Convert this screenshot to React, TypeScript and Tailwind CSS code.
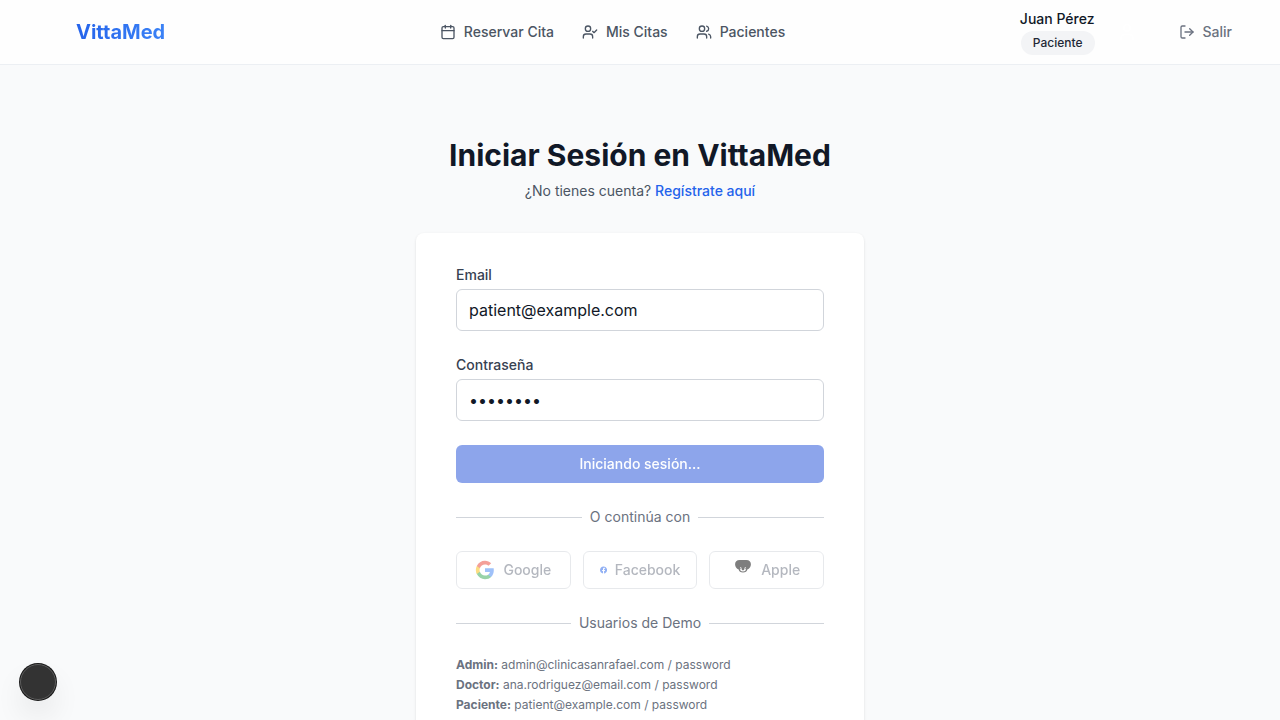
import { useState } from "react";
import type { ReactNode } from "react";
import { Calendar, LogOut, User, UserCheck, Users } from "lucide-react";

const navItems = [
  { label: "Reservar Cita", icon: Calendar },
  { label: "Mis Citas", icon: UserCheck },
  { label: "Pacientes", icon: Users },
];

const demoUsers = [
  { role: "Admin:", email: "admin@clinicasanrafael.com" },
  { role: "Doctor:", email: "ana.rodriguez@email.com" },
  { role: "Paciente:", email: "patient@example.com" },
];

function Header() {
  return (
    <header className="border-b border-[#eceff3] bg-[#fefefe]">
      <div className="mx-auto flex h-16 max-w-7xl items-center justify-between px-8">
        <a href="#inicio" className="mr-10 pl-11 text-xl font-bold">
          <span className="bg-gradient-to-r from-[#2563eb] to-[#3b82f6] bg-clip-text text-transparent">VittaMed</span>
        </a>
        <nav className="flex items-center gap-1">
          {navItems.map(({ label, icon: Icon }) => (
            <a key={label} href="#citas" className="flex items-center gap-2 px-3 py-2 text-sm font-medium text-[#4b5563]">
              <Icon className="size-4" />
              {label}
            </a>
          ))}
        </nav>
        <div className="flex items-center gap-4">
          <div className="flex items-center gap-3">
            <div className="flex flex-col items-end gap-0.5">
              <p className="text-sm font-medium text-[#111827]">Juan Pérez</p>
              <span className="rounded-full bg-[#f3f4f6] px-3 py-1 text-xs font-medium text-[#1f2937]">Paciente</span>
            </div>
            <div className="flex size-10 items-center justify-center rounded-full text-white">
              <User className="size-5" />
            </div>
          </div>
          <button type="button" className="flex items-center gap-2 px-4 py-2 text-sm font-medium text-[#6b7280]">
            <LogOut className="size-4" />
            Salir
          </button>
        </div>
      </div>
    </header>
  );
}

function Divider({ children }: { children: ReactNode }) {
  return (
    <div className="mt-6 flex items-center gap-2 text-sm text-[#6b7280]">
      <span className="h-px flex-1 bg-[#d1d5db]" />
      {children}
      <span className="h-px flex-1 bg-[#d1d5db]" />
    </div>
  );
}

function GoogleIcon() {
  return (
    <svg className="h-5 w-5" viewBox="0 0 24 24" aria-hidden="true">
      <path fill="#4285F4" d="M22.56 12.25c0-.78-.07-1.53-.2-2.25H12v4.26h5.92c-.26 1.37-1.04 2.53-2.21 3.31v2.77h3.57c2.08-1.92 3.28-4.74 3.28-8.09z" />
      <path fill="#34A853" d="M12 23c2.97 0 5.46-.98 7.28-2.66l-3.57-2.77c-.98.66-2.23 1.06-3.71 1.06-2.86 0-5.29-1.93-6.16-4.53H2.18v2.84C3.99 20.53 7.7 23 12 23z" />
      <path fill="#FBBC05" d="M5.84 14.09c-.22-.66-.35-1.36-.35-2.09s.13-1.43.35-2.09V7.07H2.18C1.43 8.55 1 10.22 1 12s.43 3.45 1.18 4.93l2.85-2.22.81-.62z" />
      <path fill="#EA4335" d="M12 5.38c1.62 0 3.06.56 4.21 1.64l3.15-3.15C17.45 2.09 14.97 1 12 1 7.7 1 3.99 3.47 2.18 7.07l3.66 2.84c.87-2.6 3.3-4.53 6.16-4.53z" />
    </svg>
  );
}

function FacebookIcon() {
  return (
    <svg className="h-5 w-5 min-w-0" viewBox="0 0 24 24" fill="#2563eb" aria-hidden="true">
      <path d="M24 12.073c0-6.627-5.373-12-12-12s-12 5.373-12 12c0 5.99 4.388 10.954 10.125 11.854v-8.385H7.078v-3.47h3.047V9.43c0-3.007 1.792-4.669 4.533-4.669 1.312 0 2.686.235 2.686.235v2.953H15.83c-1.491 0-1.956.925-1.956 1.874v2.25h3.328l-.532 3.47h-2.796v8.385C19.612 23.027 24 18.062 24 12.073z" />
    </svg>
  );
}

function AppleIcon() {
  return (
    <svg className="h-5 w-5" viewBox="0 0 24 24" fill="#000000" aria-hidden="true">
      <path fillRule="evenodd" d="M8 0h8c3.600 0 5.500 2.200 5.500 5.200 0 3-1.700 5.400-4.300 6.200-.3 2.200-2.200 3.600-5.200 3.600s-4.900-1.400-5.200-3.600C4.200 10.600 2.500 8.200 2.500 5.200 2.500 2.200 4.400 0 8 0zM9.200 8.600c-.6 0-1 .5-1 1.200h1.200c0 .3.200.5.500.8-.9-.2-1.300.2-1.300.8 0 1.500 1.400 2.400 3.400 2.400s3.400-.9 3.400-2.400c0-.6-.4-1-1.300-.8.3-.3.5-.5.500-.8h1.200c0-.7-.4-1.200-1-1.200s-1 .5-1 1.200c0 1.700-.7 2.500-1.800 2.500s-1.800-.8-1.800-2.500c0-.7-.4-1.200-1-1.200z" />
    </svg>
  );
}

const providers = [
  { name: "Google", icon: GoogleIcon },
  { name: "Facebook", icon: FacebookIcon },
  { name: "Apple", icon: AppleIcon },
];

function Field({ id, label, type, initial }: { id: string; label: string; type: string; initial: string }) {
  const [value, setValue] = useState(initial);
  return (
    <div>
      <label htmlFor={id} className="block text-sm font-medium text-[#374151]">{label}</label>
      <input
        id={id}
        type={type}
        value={value}
        onChange={(event) => setValue(event.target.value)}
        className="mt-1 block w-full rounded-md border border-[#d1d5db] bg-white px-3 py-2 text-base text-[#111827]"
      />
    </div>
  );
}

export default function App() {
  return (
    <div className="min-h-screen bg-[#f9fafb] font-['Inter',sans-serif] antialiased">
      <Header />
      <main className="px-8 pt-18 pb-12">
        <h1 className="text-center text-3xl font-bold text-[#111827]">Iniciar Sesión en VittaMed</h1>
        <p className="mt-2 text-center text-sm text-[#4b5563]">
          ¿No tienes cuenta? <a href="#registro" className="font-medium text-[#2563eb]">Regístrate aquí</a>
        </p>
        <section className="mx-auto mt-8 max-w-md rounded-lg bg-white px-10 py-8 shadow-sm">
          <form className="flex flex-col gap-6">
            <Field id="email" label="Email" type="email" initial="patient@example.com" />
            <Field id="password" label="Contraseña" type="password" initial="password" />
            <button type="submit" disabled className="w-full rounded-md border border-transparent bg-[#1d4ed8] px-4 py-2 text-sm font-medium text-white opacity-50">
              Iniciando sesión...
            </button>
          </form>
          <Divider>O continúa con</Divider>
          <div className="mt-6 grid grid-cols-3 gap-3">
            {providers.map(({ name, icon: Icon }) => (
              <button key={name} type="button" disabled className="flex items-center justify-center rounded-md border border-[#d1d5db] bg-white px-4 py-2 text-sm font-medium text-[#6b7280] opacity-50">
                <Icon />
                <span className="ml-2">{name}</span>
              </button>
            ))}
          </div>
          <Divider>Usuarios de Demo</Divider>
          <div className="mt-6 flex flex-col gap-1 text-xs text-[#6b7280]">
            {demoUsers.map(({ role, email }) => (
              <p key={role}>
                <strong>{role}</strong> {email} / password
              </p>
            ))}
          </div>
        </section>
      </main>
      <button
        type="button"
        aria-label="Herramientas"
        className="fixed bottom-5 left-5 size-9 rounded-full border border-[#5c5c5c] bg-[#333333] shadow-[0_0_0_1px_#171717,0_16px_32px_-8px_rgba(0,0,0,0.24)]"
      />
    </div>
  );
}
